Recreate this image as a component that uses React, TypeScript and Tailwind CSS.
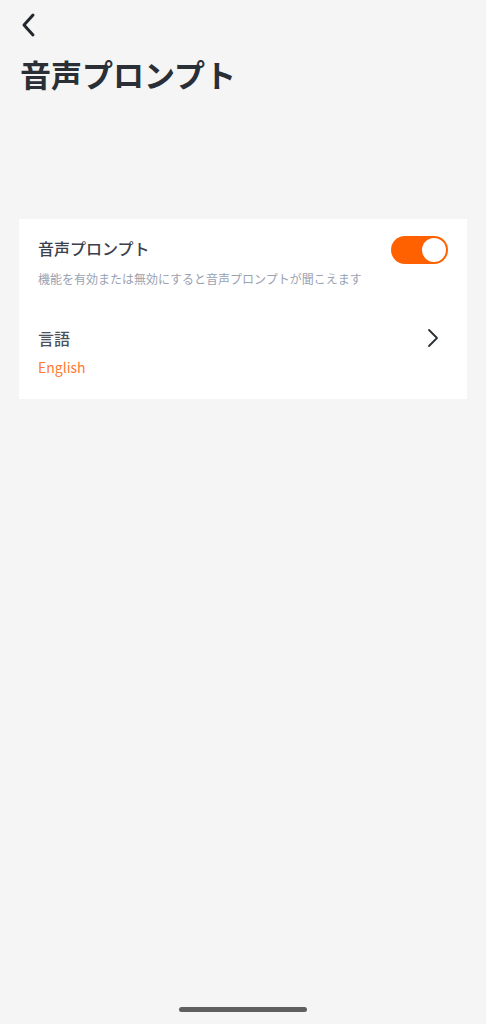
export default function App() {
  const font = { fontFamily: '"Noto Sans CJK JP", "Noto Sans", sans-serif' };

  return (
    <div className="relative w-[486px] h-[1024px] bg-[#f5f5f5] overflow-hidden" style={font}>
      {/* Header */}
      <div className="px-5 pt-[12px]">
        <button className="block w-[24px] h-[26px] text-[#22272e]">
          <svg width="18" height="26" viewBox="0 0 18 26" fill="none">
            <path d="M13 3 L4 13 L13 23" stroke="currentColor" strokeWidth="3" strokeLinecap="round" strokeLinejoin="round" />
          </svg>
        </button>
        <h1 className="mt-[16px] text-[31px] leading-[40px] font-bold text-[#2a2f36]">音声プロンプト</h1>
      </div>

      {/* Settings card */}
      <div className="mx-[19px] mt-[125px] bg-white w-[448px]">
        <div className="flex items-start justify-between pl-[19px] pr-[19px] pt-[17px] pb-[20px]">
          <div>
            <div className="text-[16px] leading-[24px] font-medium text-[#3a414c]">音声プロンプト</div>
            <div className="mt-[11px] text-[12px] leading-[16px] text-[#9aa2b2]">
              機能を有効または無効にすると音声プロンプトが聞こえます
            </div>
          </div>
          <div className="w-[57px] h-[28px] rounded-full bg-[#ff6000] flex items-center justify-end pr-[2px]">
            <div className="w-[24px] h-[24px] rounded-full bg-white" />
          </div>
        </div>

        <div className="flex items-start justify-between pl-[19px] pr-[28px] pt-[19px] pb-[22px]">
          <div>
            <div className="text-[16px] leading-[24px] font-medium text-[#4a5260]">言語</div>
            <div className="mt-[7px] text-[14px] leading-[20px] text-[#ff7a33]">English</div>
          </div>
          <svg className="mt-[2px]" width="12" height="20" viewBox="0 0 12 20" fill="none">
            <path d="M2 2 L10 10 L2 18" stroke="#2a2f36" strokeWidth="1.8" strokeLinecap="round" strokeLinejoin="round" />
          </svg>
        </div>
      </div>

      {/* Home indicator */}
      <div className="absolute left-[179px] top-[1007px] w-[128px] h-[5px] rounded-full bg-[#5f5f5f]" />
    </div>
  );
}
